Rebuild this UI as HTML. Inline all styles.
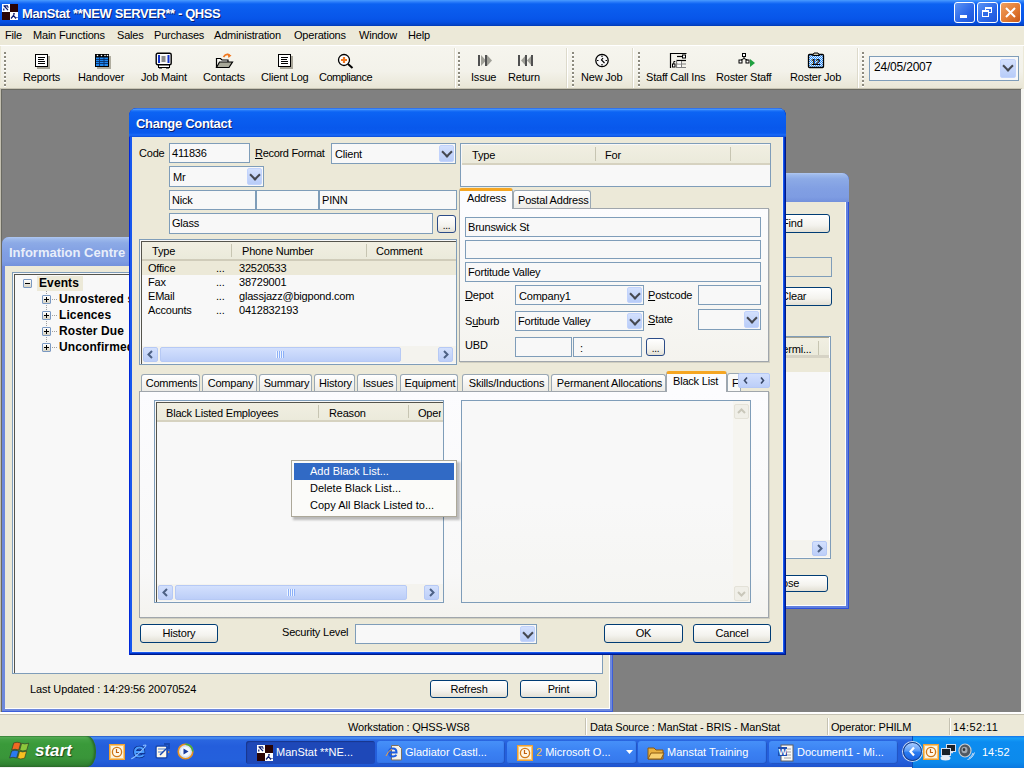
<!DOCTYPE html>
<html><head><meta charset="utf-8">
<style>
*{box-sizing:border-box;margin:0;padding:0}
html,body{width:1024px;height:768px;overflow:hidden}
body{position:relative;background:#808080;font-family:"Liberation Sans",sans-serif;font-size:11px;color:#000;letter-spacing:-0.2px}
.a{position:absolute}
.t{position:absolute;white-space:nowrap;line-height:12px}
.inp{position:absolute;border:1px solid #7F9DB9;background:#F8F8F8}
.cb{position:absolute;border:1px solid #7F9DB9;background:#F8F8F8}
.dd{position:absolute;top:1px;right:1px;bottom:1px;width:15px;border-radius:2px;background:linear-gradient(#D3E0FD,#B8CCF8);border:1px solid #C2D3FC}
.dd:after{content:"";position:absolute;left:3px;top:2px;width:6px;height:6px;border-right:2px solid #454850;border-bottom:2px solid #454850;transform:rotate(45deg)}
.btn{position:absolute;border:1px solid #003C74;border-radius:3px;background:linear-gradient(#FFFFFF 0%,#F4F3EE 60%,#E3E0D5 100%);text-align:center;line-height:17px}
.beige{background:#ECE9D8}
.hdr{position:absolute;background:linear-gradient(#F1EFE2,#EBEADB);border-bottom:3px solid #D6D3C5}
.tab{position:absolute;height:18px;border:1px solid #9AA8B4;border-bottom:none;border-radius:3px 3px 0 0;background:linear-gradient(#FFFFFF,#ECEBE6);}
.tab .t{top:4px}
.sb{position:absolute;background:#F4F3EE}
.sbb{position:absolute;border-radius:2px;background:linear-gradient(#D3E0FD,#BCCEF8);border:1px solid #B6C9F5}
</style></head><body>

<!-- main window frame -->
<div class="a beige" style="left:0;top:26px;width:1024px;height:63px"></div>
<div class="a" style="left:0;top:89px;width:1px;height:624px;background:#C4C0B0"></div>
<div class="a" style="left:1021px;top:89px;width:3px;height:624px;background:#F6F6F2"></div>

<!-- title bar -->
<div class="a" style="left:0;top:0;width:1024px;height:26px;background:linear-gradient(#4A9CFF 0px,#2A7CFA 2px,#0C62F2 4px,#0A5CEE 10px,#0856EA 18px,#0650E2 22px,#0444C8 25px,#0038B0 26px)"></div>
<svg class="a" style="left:2px;top:4px" width="16" height="16"><rect width="16" height="16" fill="#fff"/><rect x="8" y="0" width="8" height="8" fill="#2A0404"/><rect x="0" y="8" width="8" height="8" fill="#2A0404"/><path d="M1.5 1.8h4.5M2.2 2L6 6.2M1.8 4.5v2M6 2.5v1.2" stroke="#0A1A70" stroke-width="1.2" fill="none"/><path d="M11 9.8h2M9 14.5l2.5-3 2.5 3M14.5 13.5h1" stroke="#0A1A70" stroke-width="1.2" fill="none"/></svg>
<div class="t" style="left:22px;top:6px;font-size:13px;font-weight:bold;color:#fff;line-height:15px;letter-spacing:-0.4px;text-shadow:1px 1px 0 #0A1E6E">ManStat **NEW SERVER** - QHSS</div>
<!-- caption buttons -->
<div class="a" style="left:954px;top:2px;width:21px;height:21px;border:1px solid #fff;border-radius:3px;background:linear-gradient(135deg,#5C94F4,#2A66E8 60%,#1D55D8)"></div>
<div class="a" style="left:960px;top:15px;width:7px;height:3px;background:#fff"></div>
<div class="a" style="left:977px;top:2px;width:21px;height:21px;border:1px solid #fff;border-radius:3px;background:linear-gradient(135deg,#5C94F4,#2A66E8 60%,#1D55D8)"></div>
<div class="a" style="left:985px;top:7px;width:7px;height:6px;border:1px solid #fff;border-top-width:2px"></div>
<div class="a" style="left:982px;top:10px;width:7px;height:7px;border:1px solid #fff;border-top-width:2px;background:#2F6BE8"></div>
<div class="a" style="left:1000px;top:2px;width:21px;height:21px;border:1px solid #fff;border-radius:3px;background:linear-gradient(135deg,#F0A060,#E07830 60%,#C85818)"></div>
<svg class="a" style="left:1004px;top:6px" width="13" height="13"><path d="M2 2L11 11M11 2L2 11" stroke="#fff" stroke-width="2"/></svg>

<!-- menu bar -->
<div class="a" style="left:0;top:45px;width:1024px;height:1px;background:#fff"></div>
<div class="t" style="left:5px;top:29px">File</div>
<div class="t" style="left:33px;top:29px">Main Functions</div>
<div class="t" style="left:117px;top:29px">Sales</div>
<div class="t" style="left:154px;top:29px">Purchases</div>
<div class="t" style="left:214px;top:29px">Administration</div>
<div class="t" style="left:294px;top:29px">Operations</div>
<div class="t" style="left:359px;top:29px">Window</div>
<div class="t" style="left:408px;top:29px">Help</div>

<!-- toolbar -->
<div class="a" style="left:1px;top:46px;width:1022px;height:42px;background:linear-gradient(#F6F5EE,#F3F2EA 60%,#E9E6D6)"></div>
<div class="a" style="left:0;top:88px;width:1022px;height:1px;background:#C8C4B4"></div>

<!-- toolbar grips & separators -->
<div class="a" style="left:4px;top:52px;width:2px;height:36px;background:repeating-linear-gradient(#8C8A7E 0 2px,#fff 2px 3px,transparent 3px 4px)"></div>
<div class="a" style="left:455px;top:48px;width:1px;height:40px;background:#fff"></div>
<div class="a" style="left:454px;top:48px;width:1px;height:40px;background:#DDDACB"></div>
<div class="a" style="left:458px;top:52px;width:2px;height:36px;background:repeating-linear-gradient(#8C8A7E 0 2px,#fff 2px 3px,transparent 3px 4px)"></div>
<div class="a" style="left:567px;top:48px;width:1px;height:40px;background:#fff"></div>
<div class="a" style="left:566px;top:48px;width:1px;height:40px;background:#DDDACB"></div>
<div class="a" style="left:572px;top:52px;width:2px;height:36px;background:repeating-linear-gradient(#8C8A7E 0 2px,#fff 2px 3px,transparent 3px 4px)"></div>
<div class="a" style="left:633px;top:48px;width:1px;height:40px;background:#fff"></div>
<div class="a" style="left:632px;top:48px;width:1px;height:40px;background:#DDDACB"></div>
<div class="a" style="left:638px;top:52px;width:2px;height:36px;background:repeating-linear-gradient(#8C8A7E 0 2px,#fff 2px 3px,transparent 3px 4px)"></div>
<div class="a" style="left:858px;top:48px;width:1px;height:40px;background:#fff"></div>
<div class="a" style="left:857px;top:48px;width:1px;height:40px;background:#DDDACB"></div>
<div class="a" style="left:862px;top:52px;width:2px;height:36px;background:repeating-linear-gradient(#8C8A7E 0 2px,#fff 2px 3px,transparent 3px 4px)"></div>

<!-- toolbar icons -->
<svg class="a" style="left:34px;top:53px" width="17" height="16"><rect x="3" y="3" width="13" height="13" fill="#A8A598"/><rect x="1.5" y="1.5" width="12" height="12" fill="#fff" stroke="#000"/><path d="M4 4.5h7M4 6.5h6M4 8.5h7M4 10.5h7" stroke="#000"/></svg>
<svg class="a" style="left:94px;top:53px" width="18" height="17"><rect x="3" y="3" width="14" height="13" fill="#B0AD9F"/><rect x="1" y="1" width="14" height="13" fill="#000"/><circle cx="3.5" cy="2.5" r="0.8" fill="#fff"/><circle cx="7.5" cy="2.5" r="0.8" fill="#fff"/><circle cx="11" cy="2.5" r="0.8" fill="#fff"/><circle cx="13.5" cy="2.5" r="0.8" fill="#fff"/><rect x="2" y="4.5" width="12" height="8.5" fill="#1E88F0"/><path d="M2 6.5h12M2 8.5h12M2 10.5h12M5.5 4v9M10 4v9" stroke="#08306A" stroke-width="0.9"/></svg>
<svg class="a" style="left:155px;top:52px" width="18" height="17"><rect x="1.2" y="1.2" width="15" height="11.5" rx="1.5" fill="#fff" stroke="#000" stroke-width="1.4"/><rect x="3" y="3" width="11.5" height="8" fill="#1434C8"/><rect x="5" y="3" width="7.5" height="8" fill="#F8F8F8"/><path d="M6.5 5h4M6.5 7h4M6.5 9h4" stroke="#202020"/><rect x="3.5" y="13" width="11" height="2.5" fill="#fff" stroke="#000"/><path d="M4 16h3M11 16h3" stroke="#000"/></svg>
<svg class="a" style="left:215px;top:52px" width="19" height="17"><path d="M8.5 5Q11 1 14.5 3" stroke="#F07820" stroke-width="1.6" fill="none"/><path d="M12.5 1.5L16.5 3.5 13.5 6z" fill="#F07820"/><path d="M1.5 15.5V6.5h4l1.5 1.5h6v2" fill="#FAFAF4" stroke="#000" stroke-width="1.2"/><path d="M1.5 15.5l3-5.5h13l-3.5 5.5z" fill="#A8A898" stroke="#000" stroke-width="1.2"/></svg>
<svg class="a" style="left:277px;top:53px" width="17" height="16"><rect x="3" y="3" width="13" height="13" fill="#A8A598"/><rect x="1.5" y="1.5" width="12" height="12" fill="#fff" stroke="#000"/><path d="M4 4.5h7M4 6.5h6M4 8.5h7M4 10.5h7" stroke="#000"/></svg>
<svg class="a" style="left:337px;top:53px" width="18" height="16"><circle cx="7" cy="7" r="5.5" fill="#fff" stroke="#000" stroke-width="1.3"/><path d="M4 7h6M7 4v6" stroke="#F07820" stroke-width="2.2"/><path d="M11 11l4.5 4" stroke="#000" stroke-width="2"/></svg>
<svg class="a" style="left:477px;top:54px" width="17" height="13"><rect x="1" y="1" width="2" height="11" fill="#505050"/><path d="M4 1l5 5.5-5 5.5z" fill="#A0A098"/><rect x="8" y="1" width="2" height="11" fill="#505050"/><path d="M10 1l5 5.5-5 5.5z" fill="#A0A098"/></svg>
<svg class="a" style="left:517px;top:54px" width="18" height="13"><rect x="1" y="1" width="2" height="11" fill="#505050"/><path d="M9 1l-5 5.5 5 5.5z" fill="#A0A098"/><rect x="8" y="1" width="2" height="11" fill="#505050"/><path d="M15 1l-5 5.5 5 5.5z" fill="#A0A098"/><rect x="14" y="1" width="2" height="11" fill="#505050"/></svg>
<svg class="a" style="left:594px;top:53px" width="16" height="15"><circle cx="8" cy="7.5" r="6.2" fill="#F8F8F8" stroke="#000" stroke-width="1.3"/><path d="M8 2.5v1.5M8 11v1.5M3 7.5h1.5M11.5 7.5H13" stroke="#000" stroke-width="1.2"/><path d="M9 5L7.5 7l3 3" stroke="#000" stroke-width="1.2" fill="none"/></svg>
<svg class="a" style="left:669px;top:52px" width="19" height="17"><path d="M1.5 16V1.5h16" stroke="#000" stroke-width="1.2" fill="none"/><path d="M8 4.5h5" stroke="#000" stroke-width="1.2"/><rect x="13.5" y="3" width="3" height="3" fill="#fff" stroke="#000"/><path d="M7 8.5h10" stroke="#000" stroke-width="1.2"/><path d="M7.5 8v8M8 12h9M8 15.5h9M12.5 9v7" stroke="#808080"/><rect x="9" y="9.5" width="3" height="2" fill="#fff"/><rect x="9" y="13" width="3" height="2" fill="#fff"/><rect x="3.5" y="12" width="2.5" height="3" fill="#fff" stroke="#000"/><path d="M4.8 12V9.5h1.5" stroke="#000" fill="none"/></svg>
<svg class="a" style="left:738px;top:52px" width="19" height="17"><rect x="4.5" y="1.5" width="3" height="3" fill="#fff" stroke="#000"/><rect x="1" y="8" width="3" height="3" fill="#fff" stroke="#000"/><rect x="8" y="8" width="3" height="3" fill="#fff" stroke="#000"/><path d="M6 4.5v2M6 6.5L3 8M6 6.5L9.5 8" stroke="#000"/><path d="M12 7l5 4-5 4z" fill="#20A040"/></svg>
<svg class="a" style="left:807px;top:52px" width="18" height="17"><defs><pattern id="chk" width="2" height="2" patternUnits="userSpaceOnUse"><rect width="2" height="2" fill="#2A8CF8"/><rect width="1" height="1" fill="#E8F4FF"/><rect x="1" y="1" width="1" height="1" fill="#E8F4FF"/></pattern></defs><rect x="1.5" y="2.5" width="15" height="13" rx="1" fill="url(#chk)" stroke="#000" stroke-width="1.3"/><path d="M5.5 3.5l1.5-2.5h4l1.5 2.5z" fill="#C8C4B0" stroke="#000" stroke-width="1"/><text x="4.2" y="13.3" font-size="9" font-family="Liberation Sans" font-weight="bold" fill="#000" letter-spacing="-0.8">12</text></svg>

<!-- toolbar labels -->
<div class="t" style="left:23px;top:71px">Reports</div>
<div class="t" style="left:78px;top:71px">Handover</div>
<div class="t" style="left:141px;top:71px">Job Maint</div>
<div class="t" style="left:203px;top:71px">Contacts</div>
<div class="t" style="left:261px;top:71px">Client Log</div>
<div class="t" style="left:319px;top:71px;letter-spacing:-0.5px">Compliance</div>
<div class="t" style="left:471px;top:71px">Issue</div>
<div class="t" style="left:508px;top:71px">Return</div>
<div class="t" style="left:581px;top:71px">New Job</div>
<div class="t" style="left:646px;top:71px">Staff Call Ins</div>
<div class="t" style="left:716px;top:71px">Roster Staff</div>
<div class="t" style="left:790px;top:71px">Roster Job</div>

<!-- date combo -->
<div class="cb" style="left:869px;top:56px;width:150px;height:25px;background:#F8F8F8"><div class="dd" style="top:2px;right:2px;bottom:2px;width:16px"><div></div></div></div>
<div class="t" style="left:874px;top:61px;font-size:12px">24/05/2007</div>


<!-- MDI grey -->
<div class="a" style="left:1px;top:89px;width:1020px;height:624px;background:#808080;border-left:1px solid #6A6A62;border-top:1px solid #6A6A62"></div>

<!-- ===== Information Centre (inactive) ===== -->
<div class="a" style="left:2px;top:237px;width:611px;height:475px;background:#6F89DC;border-radius:7px 7px 0 0;box-shadow:inset -1px -1px 0 #3C5ED8"></div>
<div class="a" style="left:2px;top:237px;width:611px;height:29px;border-radius:7px 7px 0 0;background:linear-gradient(#B0C8F2 0px,#9DB9EB 2px,#8CAAE6 6px,#819FE3 16px,#7E9CE2 24px,#7391DC 29px)"></div>
<div class="a" style="left:5px;top:266px;width:605px;height:443px;background:#ECE9D8;border-right:1px solid #fff;border-bottom:1px solid #fff"></div>
<div class="t" style="left:9px;top:245px;font-size:13px;font-weight:bold;color:#E8EEFA;letter-spacing:0;line-height:15px">Information Centre</div>
<!-- tree -->
<div class="a" style="left:12px;top:272px;width:591px;height:402px;border:1px solid #7F9DB9;background:#F8F8F8"></div>
<div class="a" style="left:14px;top:274px;width:588px;height:399px;border-left:1px solid #55544C;border-top:1px solid #55544C"></div>
<div class="a" style="left:23px;top:279px;width:9px;height:9px;border:1px solid #7A99C2;border-radius:1px;background:linear-gradient(#fff,#D8D4C4)"></div>
<div class="a" style="left:25px;top:283px;width:5px;height:1px;background:#000"></div>
<div class="a" style="left:37px;top:276px;width:46px;height:15px;background:#ECE9D8"></div>
<div class="a" style="left:46px;top:291px;width:1px;height:57px;background:repeating-linear-gradient(#A0A0A0 0 1px,transparent 1px 2px)"></div>
<div class="t" style="left:39px;top:276px;font-size:12px;font-weight:bold;line-height:14px;letter-spacing:0.1px">Events</div>
<div class="a" style="left:42px;top:295px;width:9px;height:9px;border:1px solid #7A99C2;border-radius:1px;background:linear-gradient(#fff,#D8D4C4)"></div><div class="a" style="left:44px;top:299px;width:5px;height:1px;background:#000"></div><div class="a" style="left:46px;top:297px;width:1px;height:5px;background:#000"></div><div class="a" style="left:52px;top:299px;width:5px;height:1px;background:repeating-linear-gradient(90deg,#A0A0A0 0 1px,transparent 1px 2px)"></div><div class="t" style="left:59px;top:292px;font-size:12px;font-weight:bold;line-height:14px;letter-spacing:0.1px">Unrostered shifts</div>
<div class="a" style="left:42px;top:311px;width:9px;height:9px;border:1px solid #7A99C2;border-radius:1px;background:linear-gradient(#fff,#D8D4C4)"></div><div class="a" style="left:44px;top:315px;width:5px;height:1px;background:#000"></div><div class="a" style="left:46px;top:313px;width:1px;height:5px;background:#000"></div><div class="a" style="left:52px;top:315px;width:5px;height:1px;background:repeating-linear-gradient(90deg,#A0A0A0 0 1px,transparent 1px 2px)"></div><div class="t" style="left:59px;top:308px;font-size:12px;font-weight:bold;line-height:14px;letter-spacing:0.1px">Licences</div>
<div class="a" style="left:42px;top:327px;width:9px;height:9px;border:1px solid #7A99C2;border-radius:1px;background:linear-gradient(#fff,#D8D4C4)"></div><div class="a" style="left:44px;top:331px;width:5px;height:1px;background:#000"></div><div class="a" style="left:46px;top:329px;width:1px;height:5px;background:#000"></div><div class="a" style="left:52px;top:331px;width:5px;height:1px;background:repeating-linear-gradient(90deg,#A0A0A0 0 1px,transparent 1px 2px)"></div><div class="t" style="left:59px;top:324px;font-size:12px;font-weight:bold;line-height:14px;letter-spacing:0.1px">Roster Due</div>
<div class="a" style="left:42px;top:343px;width:9px;height:9px;border:1px solid #7A99C2;border-radius:1px;background:linear-gradient(#fff,#D8D4C4)"></div><div class="a" style="left:44px;top:347px;width:5px;height:1px;background:#000"></div><div class="a" style="left:46px;top:345px;width:1px;height:5px;background:#000"></div><div class="a" style="left:52px;top:347px;width:5px;height:1px;background:repeating-linear-gradient(90deg,#A0A0A0 0 1px,transparent 1px 2px)"></div><div class="t" style="left:59px;top:340px;font-size:12px;font-weight:bold;line-height:14px;letter-spacing:0.1px">Unconfirmed</div>

<div class="t" style="left:30px;top:683px;letter-spacing:-0.1px">Last Updated : 14:29:56 20070524</div>
<div class="btn" style="left:430px;top:680px;width:78px;height:18px">Refresh</div>
<div class="btn" style="left:520px;top:680px;width:77px;height:18px">Print</div>

<!-- ===== right background window (inactive) ===== -->
<div class="a" style="left:700px;top:173px;width:149px;height:436px;background:#6080DE;border-radius:0 7px 0 0;box-shadow:inset -1px -1px 0 #2E52DA"></div>
<div class="a" style="left:700px;top:173px;width:149px;height:29px;border-radius:0 7px 0 0;background:linear-gradient(#B0C8F2 0px,#9DB9EB 2px,#8CAAE6 6px,#819FE3 16px,#7E9CE2 24px,#7391DC 29px)"></div>
<div class="a" style="left:700px;top:202px;width:146px;height:404px;background:#ECE9D8;border-right:1px solid #fff;border-bottom:1px solid #fff"></div>
<div class="btn" style="left:700px;top:214px;width:130px;height:19px;text-align:left;padding-left:81px">Find</div>
<div class="a" style="left:700px;top:257px;width:132px;height:20px;border:1px solid #7F9DB9;background:#ECE9D8"></div>
<div class="btn" style="left:700px;top:287px;width:132px;height:19px;text-align:left;padding-left:80px">Clear</div>
<div class="a" style="left:700px;top:336px;width:131px;height:223px;border:1px solid #7F9DB9;background:#F8F8F8"></div>
<div class="hdr" style="left:701px;top:337px;width:128px;height:21px;border-top:1px solid #A8A490"></div><div class="a" style="left:829px;top:337px;width:1px;height:221px;background:#fff"></div>
<div class="a" style="left:818px;top:341px;width:1px;height:14px;background:#C7C5B2"></div>
<div class="t" style="left:777px;top:343px">Termi...</div>
<div class="a" style="left:701px;top:358px;width:129px;height:14px;background:#ECE9D8"></div>
<div class="sb" style="left:701px;top:540px;width:129px;height:17px"></div>
<div class="sbb" style="left:812px;top:541px;width:15px;height:15px"></div>
<svg class="a" style="left:815px;top:544px" width="9" height="9"><path d="M3 1l3.5 3.5L3 8" stroke="#4D6185" stroke-width="2" fill="none"/></svg>
<div class="btn" style="left:700px;top:575px;width:128px;height:17px;text-align:left;padding-left:71px;line-height:15px">Close</div>

<!-- ===== Change Contact dialog ===== -->
<div class="a" style="left:129px;top:108px;width:657px;height:547px;background:#1858EE;border-radius:8px 8px 0 0;box-shadow:inset 1px 0 0 #0028D8,inset -1px -1px 0 #001A88,inset -2px -2px 0 #0032C4"></div>
<div class="a" style="left:129px;top:108px;width:657px;height:29px;border-radius:8px 8px 0 0;background:linear-gradient(#0A3ED8 0px,#5AA8FF 1px,#2C80FA 2px,#0C64F4 4px,#0A5EF0 10px,#0858EC 20px,#0A5AEE 25px,#1A6AF8 27px,#0A4CD8 29px)"></div>
<div class="a" style="left:132px;top:137px;width:651px;height:515px;background:#ECE9D8"></div>
<div class="a" style="left:782px;top:137px;width:1px;height:515px;background:#F4F2EA"></div>
<div class="a" style="left:132px;top:651px;width:651px;height:1px;background:#F4F2EA"></div>
<div class="t" style="left:136px;top:116px;font-size:13px;font-weight:bold;color:#fff;line-height:15px;letter-spacing:-0.3px;text-shadow:1px 1px 0 #0A1E6E">Change Contact</div>

<!-- top-left fields -->
<div class="t" style="left:139px;top:147px">Code</div>
<div class="inp" style="left:169px;top:143px;width:81px;height:20px"></div>
<div class="t" style="left:172px;top:147px">411836</div>
<div class="t" style="left:255px;top:147px;letter-spacing:-0.3px"><u>R</u>ecord Format</div>
<div class="cb" style="left:331px;top:143px;width:125px;height:21px"><div class="dd"></div></div>
<div class="t" style="left:335px;top:148px">Client</div>
<div class="cb" style="left:169px;top:166px;width:95px;height:21px"><div class="dd"></div></div>
<div class="t" style="left:173px;top:171px">Mr</div>
<div class="inp" style="left:169px;top:190px;width:87px;height:20px"></div>
<div class="t" style="left:172px;top:194px">Nick</div>
<div class="inp" style="left:256px;top:190px;width:63px;height:20px"></div>
<div class="inp" style="left:319px;top:190px;width:138px;height:20px"></div>
<div class="t" style="left:322px;top:194px">PINN</div>
<div class="inp" style="left:169px;top:213px;width:264px;height:21px"></div>
<div class="t" style="left:172px;top:217px">Glass</div>
<div class="btn" style="left:437px;top:215px;width:19px;height:18px;line-height:20px;font-size:10px;border-color:#2C4C88">...</div>

<!-- phone list -->
<div class="a" style="left:139px;top:239px;width:318px;height:126px;border:1px solid #7F9DB9;background:#F8F8F8"></div>
<div class="a" style="left:141px;top:241px;width:315px;height:123px;border-left:1px solid #55544C;border-top:1px solid #55544C"></div>
<div class="hdr" style="left:142px;top:242px;width:314px;height:19px;border-bottom-width:2px;border-bottom-color:#D0CCBA"></div>
<div class="a" style="left:231px;top:244px;width:1px;height:13px;background:#C7C5B2"></div>
<div class="a" style="left:366px;top:244px;width:1px;height:13px;background:#C7C5B2"></div>
<div class="t" style="left:152px;top:245px">Type</div>
<div class="t" style="left:242px;top:245px">Phone Number</div>
<div class="t" style="left:376px;top:245px">Comment</div>
<div class="a" style="left:142px;top:261px;width:314px;height:14px;background:#ECE9D8"></div>
<div class="t" style="left:148px;top:262px">Office</div><div class="t" style="left:216px;top:262px">...</div><div class="t" style="left:239px;top:262px">32520533</div>
<div class="t" style="left:148px;top:276px">Fax</div><div class="t" style="left:216px;top:276px">...</div><div class="t" style="left:239px;top:276px">38729001</div>
<div class="t" style="left:148px;top:290px">EMail</div><div class="t" style="left:216px;top:290px">...</div><div class="t" style="left:239px;top:290px">glassjazz@bigpond.com</div>
<div class="t" style="left:148px;top:304px">Accounts</div><div class="t" style="left:216px;top:304px">...</div><div class="t" style="left:239px;top:304px">0412832193</div>
<div class="sb" style="left:142px;top:346px;width:314px;height:17px"></div>
<div class="sbb" style="left:143px;top:347px;width:15px;height:15px"></div>
<svg class="a" style="left:146px;top:350px" width="9" height="9"><path d="M6 1L2.5 4.5 6 8" stroke="#4D6185" stroke-width="2" fill="none"/></svg>
<div class="sbb" style="left:160px;top:347px;width:241px;height:15px"></div>
<div class="a" style="left:276px;top:351px;width:8px;height:7px;background:repeating-linear-gradient(90deg,#EEF4FE 0 1px,#8CB0F8 1px 2px)"></div>
<div class="sbb" style="left:438px;top:347px;width:15px;height:15px"></div>
<svg class="a" style="left:441px;top:350px" width="9" height="9"><path d="M3 1l3.5 3.5L3 8" stroke="#4D6185" stroke-width="2" fill="none"/></svg>

<!-- Type/For list -->
<div class="a" style="left:460px;top:143px;width:311px;height:44px;border:1px solid #7F9DB9;background:#F8F8F8"></div>
<div class="hdr" style="left:462px;top:145px;width:308px;height:20px;border-bottom-width:2px;border-bottom-color:#D6D2C0"></div>
<div class="a" style="left:595px;top:147px;width:1px;height:14px;background:#C7C5B2"></div>
<div class="a" style="left:730px;top:147px;width:1px;height:14px;background:#C7C5B2"></div>
<div class="t" style="left:472px;top:149px">Type</div>
<div class="t" style="left:605px;top:149px">For</div>

<!-- address tabs -->
<div class="a" style="left:459px;top:208px;width:310px;height:154px;border:1px solid #A0A6AC;background:linear-gradient(#FCFCFE,#F4F3EE);box-shadow:1px 1px 0 #D0CEC0"></div>
<div class="tab" style="left:513px;top:190px;width:78px;height:18px"><div class="t" style="left:4px;top:3px">Postal Address</div></div>
<div class="a" style="left:459px;top:188px;width:54px;height:21px;border:1px solid #A0A6AC;border-bottom:none;border-radius:3px 3px 0 0;background:#FCFCFE;border-top:3px solid #F5A623"></div>
<div class="t" style="left:467px;top:192px">Address</div>
<div class="inp" style="left:465px;top:217px;width:296px;height:20px"></div>
<div class="t" style="left:468px;top:221px">Brunswick St</div>
<div class="inp" style="left:465px;top:240px;width:296px;height:19px"></div>
<div class="inp" style="left:465px;top:262px;width:296px;height:20px"></div>
<div class="t" style="left:468px;top:266px">Fortitude Valley</div>
<div class="t" style="left:465px;top:289px"><u>D</u>epot</div>
<div class="cb" style="left:515px;top:285px;width:129px;height:20px"><div class="dd"></div></div>
<div class="t" style="left:519px;top:290px">Company1</div>
<div class="t" style="left:648px;top:289px"><u>P</u>ostcode</div>
<div class="inp" style="left:698px;top:285px;width:63px;height:20px"></div>
<div class="t" style="left:465px;top:315px">S<u>u</u>burb</div>
<div class="cb" style="left:515px;top:311px;width:129px;height:20px"><div class="dd"></div></div>
<div class="t" style="left:518px;top:315px">Fortitude Valley</div>
<div class="t" style="left:648px;top:313px"><u>S</u>tate</div>
<div class="cb" style="left:698px;top:309px;width:63px;height:21px"><div class="dd"></div></div>
<div class="t" style="left:465px;top:339px">UBD</div>
<div class="inp" style="left:515px;top:337px;width:57px;height:20px"></div>
<div class="inp" style="left:573px;top:337px;width:69px;height:20px"></div>
<div class="t" style="left:580px;top:342px">:</div>
<div class="btn" style="left:646px;top:338px;width:19px;height:18px;line-height:20px;font-size:10px;border-color:#2C4C88">...</div>

<!-- bottom tabs -->
<div class="a" style="left:139px;top:391px;width:630px;height:227px;border:1px solid #A0A6AC;background:linear-gradient(#FCFCFE 0%,#F8F8F8 80%,#F4F3EF 100%);box-shadow:1px 1px 0 #D0CEC0"></div>
<div class="tab" style="left:141px;top:374px;width:59px;height:17px"><div class="t" style="left:1px;width:57px;text-align:center;top:2px">Comments</div></div>
<div class="tab" style="left:202px;top:374px;width:55px;height:17px"><div class="t" style="left:1px;width:53px;text-align:center;top:2px">Company</div></div>
<div class="tab" style="left:259px;top:374px;width:53px;height:17px"><div class="t" style="left:1px;width:51px;text-align:center;top:2px">Summary</div></div>
<div class="tab" style="left:314px;top:374px;width:41px;height:17px"><div class="t" style="left:1px;width:39px;text-align:center;top:2px">History</div></div>
<div class="tab" style="left:357px;top:374px;width:40px;height:17px"><div class="t" style="left:1px;width:38px;text-align:center;top:2px">Issues</div></div>
<div class="tab" style="left:400px;top:374px;width:58px;height:17px"><div class="t" style="left:1px;width:56px;text-align:center;top:2px">Equipment</div></div>
<div class="tab" style="left:462px;top:374px;width:87px;height:17px"><div class="t" style="left:1px;width:85px;text-align:center;top:2px">Skills/Inductions</div></div>
<div class="tab" style="left:551px;top:374px;width:115px;height:17px"><div class="t" style="left:1px;width:113px;text-align:center;top:2px">Permanent Allocations</div></div>
<div class="tab" style="left:727px;top:373px;width:14px;height:18px;overflow:hidden;background:#FAFAF8"><div class="t" style="left:4px;top:3px">F</div></div>
<div class="a" style="left:666px;top:371px;width:61px;height:21px;border:1px solid #A0A6AC;border-bottom:none;border-radius:3px 3px 0 0;background:#FCFCFE;border-top:3px solid #F5A623"></div><div class="t" style="left:673px;top:375px">Black List</div>
<div class="sbb" style="left:738px;top:373px;width:32px;height:15px;border-radius:2px"></div><svg class="a" style="left:742px;top:376px" width="24" height="9"><path d="M5 1.5L2.5 4.5 5 7.5M19 1.5l2.5 3-2.5 3" stroke="#3A4A6A" stroke-width="1.6" fill="none"/></svg>


<!-- black list listview -->
<div class="a" style="left:154px;top:400px;width:290px;height:203px;border:1px solid #7F9DB9;background:#F8F8F8"></div>
<div class="a" style="left:156px;top:402px;width:287px;height:200px;border-left:1px solid #55544C;border-top:1px solid #55544C"></div>
<div class="hdr" style="left:157px;top:403px;width:286px;height:19px;border-bottom-width:2px;border-bottom-color:#D6D2C0"></div>
<div class="a" style="left:318px;top:405px;width:1px;height:13px;background:#C7C5B2"></div>
<div class="a" style="left:408px;top:405px;width:1px;height:13px;background:#C7C5B2"></div>
<div class="t" style="left:166px;top:407px">Black Listed Employees</div>
<div class="t" style="left:329px;top:407px">Reason</div>
<div class="t" style="left:418px;top:407px;width:23px;overflow:hidden">Operator</div>
<div class="sb" style="left:157px;top:584px;width:286px;height:17px"></div>
<div class="sbb" style="left:158px;top:585px;width:15px;height:15px"></div>
<svg class="a" style="left:161px;top:588px" width="9" height="9"><path d="M6 1L2.5 4.5 6 8" stroke="#4D6185" stroke-width="2" fill="none"/></svg>
<div class="sbb" style="left:175px;top:585px;width:232px;height:15px"></div>
<div class="a" style="left:287px;top:589px;width:8px;height:7px;background:repeating-linear-gradient(90deg,#EEF4FE 0 1px,#8CB0F8 1px 2px)"></div>
<div class="sbb" style="left:424px;top:585px;width:15px;height:15px"></div>
<svg class="a" style="left:427px;top:588px" width="9" height="9"><path d="M3 1l3.5 3.5L3 8" stroke="#4D6185" stroke-width="2" fill="none"/></svg>

<!-- memo -->
<div class="a" style="left:461px;top:400px;width:290px;height:203px;border:1px solid #7F9DB9;background:linear-gradient(#F8F8F8 50%,#F5F5F2 100%)"></div>
<div class="a" style="left:733px;top:401px;width:17px;height:201px;background:#F6F5F0"></div>
<div class="a" style="left:734px;top:404px;width:15px;height:15px;border:1px solid #E4E2D8;border-radius:2px;background:#F0EFE8"></div>
<svg class="a" style="left:737px;top:407px" width="9" height="9"><path d="M1 6l3.5-3.5L8 6" stroke="#C9C7BA" stroke-width="2" fill="none"/></svg>
<div class="a" style="left:734px;top:586px;width:15px;height:15px;border:1px solid #E4E2D8;border-radius:2px;background:#F0EFE8"></div>
<svg class="a" style="left:737px;top:589px" width="9" height="9"><path d="M1 3l3.5 3.5L8 3" stroke="#C9C7BA" stroke-width="2" fill="none"/></svg>

<!-- bottom row -->
<div class="btn" style="left:140px;top:624px;width:78px;height:19px">History</div>
<div class="t" style="left:282px;top:626px">Security Level</div>
<div class="cb" style="left:355px;top:624px;width:182px;height:20px"><div class="dd"></div></div>
<div class="btn" style="left:604px;top:624px;width:79px;height:19px">OK</div>
<div class="btn" style="left:693px;top:624px;width:78px;height:19px">Cancel</div>

<!-- context menu -->
<div class="a" style="left:293px;top:462px;width:167px;height:58px;background:rgba(0,0,0,0.25);filter:blur(1px)"></div>
<div class="a" style="left:291px;top:460px;width:166px;height:57px;border:1px solid #ACA899;background:#FBFBF9"></div>
<div class="a" style="left:294px;top:463px;width:160px;height:17px;background:#316AC5"></div>
<div class="t" style="left:310px;top:465px;color:#fff;letter-spacing:0">Add Black List...</div>
<div class="t" style="left:310px;top:482px;letter-spacing:0">Delete Black List...</div>
<div class="t" style="left:310px;top:499px;letter-spacing:0">Copy All Black Listed to...</div>

<!-- status bar -->
<div class="a" style="left:0;top:712px;width:1024px;height:24px;background:#ECE9D8"></div>
<div class="a" style="left:0;top:712px;width:1024px;height:2px;background:#FFFFFF"></div>
<div class="a" style="left:0;top:714px;width:1024px;height:1px;background:#C5C2B2"></div>
<div class="a" style="left:585px;top:718px;width:1px;height:17px;background:#C5C2B2"></div><div class="a" style="left:586px;top:718px;width:1px;height:17px;background:#fff"></div>
<div class="a" style="left:827px;top:718px;width:1px;height:17px;background:#C5C2B2"></div><div class="a" style="left:828px;top:718px;width:1px;height:17px;background:#fff"></div>
<div class="a" style="left:949px;top:718px;width:1px;height:17px;background:#C5C2B2"></div><div class="a" style="left:950px;top:718px;width:1px;height:17px;background:#fff"></div>
<div class="t" style="left:348px;top:721px">Workstation : QHSS-WS8</div>
<div class="t" style="left:590px;top:721px">Data Source : ManStat - BRIS - ManStat</div>
<div class="t" style="left:831px;top:721px">Operator: PHILM</div>
<div class="t" style="left:953px;top:721px;letter-spacing:0.4px">14:52:11</div>

<!-- taskbar -->
<div class="a" style="left:0;top:736px;width:1024px;height:32px;background:linear-gradient(#1F48B8 0px,#3D82EE 1px,#4A90F0 2px,#2A66E0 4px,#245EDC 10px,#2460DC 24px,#2058D4 29px,#1C4EC6 32px)"></div>
<div class="a" style="left:0;top:767px;width:1024px;height:1px;background:#F0F0F0"></div>
<!-- start -->
<div class="a" style="left:0;top:736px;width:96px;height:31px;border-radius:0 9px 9px 0 / 0 15px 15px 0;background:linear-gradient(#2F7A2F 0px,#5AB05A 1px,#44A244 3px,#3A9A3A 8px,#399539 22px,#2F8030 29px,#2A6A2A 31px);box-shadow:inset -2px 0 2px #2A6A2A"></div>
<svg class="a" style="left:9px;top:741px" width="23" height="21"><g transform="skewX(-8)"><path d="M5 2q3-1.5 7 0l-1 7q-4-1.5-7 0z" fill="#F06A22" stroke="#303020" stroke-width="0.6"/><path d="M13 2.2q3 1.5 7 0l-1 7q-4 1.5-7 0z" fill="#8CC83C" stroke="#303020" stroke-width="0.6"/><path d="M4 10q3-1.5 7 0l-1 7q-4-1.5-7 0z" fill="#2A7AF0" stroke="#303020" stroke-width="0.6"/><path d="M12 10.2q3 1.5 7 0l-1 7q-4 1.5-7 0z" fill="#F8C020" stroke="#303020" stroke-width="0.6"/></g></svg>
<div class="t" style="left:35px;top:742px;font-size:17px;font-weight:bold;font-style:italic;color:#fff;line-height:18px;letter-spacing:0;text-shadow:1px 1px 1px #1A4A1A">start</div>
<!-- quick launch -->
<svg class="a" style="left:109px;top:744px" width="16" height="16"><rect x="0.5" y="0.5" width="15" height="15" fill="#FBF3E0" stroke="#F0A030"/><rect x="1.5" y="1.5" width="13" height="13" fill="none" stroke="#F8C878"/><circle cx="8" cy="8" r="4.6" fill="#FFF8E8" stroke="#D07818" stroke-width="1.3"/><path d="M7.5 5v3.5h2.5" stroke="#C06010" stroke-width="1.2" fill="none"/></svg>
<svg class="a" style="left:131px;top:743px" width="17" height="17"><path d="M4 9h8.5Q12.5 4.5 8.5 4.5Q4 4.5 4 9Q4 13.5 8.5 13.5Q11 13.5 12.5 12" stroke="#0A2A80" stroke-width="3.4" fill="none"/><path d="M4 9h8.5Q12.5 4.5 8.5 4.5Q4 4.5 4 9Q4 13.5 8.5 13.5Q11 13.5 12.5 12" stroke="#4A9CFF" stroke-width="2" fill="none"/><path d="M1.5 15Q-1 17 4 13.5Q10 9 14 4Q16.5 1 12 2.5" stroke="#8CC0FF" stroke-width="1.1" fill="none"/></svg>
<svg class="a" style="left:155px;top:743px" width="16" height="17"><rect x="1" y="3" width="11" height="12" rx="1.5" fill="#FFF8E8" stroke="#1848B0" stroke-width="1.5"/><path d="M3 6h7M3 9h5" stroke="#5080D0"/><path d="M9 1h5v5" stroke="#1848B0" stroke-width="1.8" fill="none"/><path d="M5 12l8-8" stroke="#1848B0" stroke-width="1.5"/><path d="M13 8l2 1-2 1z" fill="#F8A020"/></svg>
<svg class="a" style="left:177px;top:743px" width="17" height="17"><circle cx="8.5" cy="8.5" r="7.3" fill="#D8E4F4" stroke="#E89020" stroke-width="1.6"/><path d="M8.5 1.2a7.3 7.3 0 0 1 7.3 7.3" stroke="#40B040" stroke-width="1.6" fill="none"/><circle cx="8.5" cy="8.5" r="4.8" fill="#F4F8FF"/><path d="M6.5 5.5l5 3-5 3z" fill="#1A3A9A"/></svg>
<!-- task buttons -->
<div class="a" style="left:246px;top:741px;width:129px;height:23px;border-radius:3px;background:#1E48B8;box-shadow:inset 1px 1px 1px #18368C"></div>
<svg class="a" style="left:257px;top:745px" width="16" height="16"><rect width="16" height="16" fill="#fff"/><rect x="8" y="0" width="8" height="8" fill="#2A0404"/><rect x="0" y="8" width="8" height="8" fill="#2A0404"/><path d="M1.5 1.8h4.5M2.2 2L6 6.2M1.8 4.5v2M6 2.5v1.2" stroke="#0A1A70" stroke-width="1.2" fill="none"/><path d="M11 9.8h2M9 14.5l2.5-3 2.5 3M14.5 13.5h1" stroke="#0A1A70" stroke-width="1.2" fill="none"/></svg>
<div class="t" style="left:276px;top:746px;color:#fff;letter-spacing:0">ManStat **NE...</div>
<div class="a" style="left:377px;top:741px;width:128px;height:23px;border-radius:3px;background:linear-gradient(#4690F8,#3A80F2 50%,#3577EC);box-shadow:inset -1px -1px 1px #2050C0"></div>
<svg class="a" style="left:385px;top:744px" width="18" height="17"><path d="M6.5 1.5h7l3 3v11.5h-10z" fill="#F4F2E8" stroke="#7A7060"/><path d="M4 8.5h7.5Q11.5 4.5 8 4.5Q4 4.5 4 8.5Q4 12.5 8 12.5Q10 12.5 11.5 11" stroke="#1A5CE0" stroke-width="2" fill="none"/><path d="M1 12Q3 7 7 5" stroke="#F0A040" stroke-width="1" fill="none"/></svg>
<div class="t" style="left:405px;top:746px;color:#fff;letter-spacing:0">Gladiator Castl...</div>
<div class="a" style="left:507px;top:741px;width:130px;height:23px;border-radius:3px;background:linear-gradient(#4690F8,#3A80F2 50%,#3577EC);box-shadow:inset -1px -1px 1px #2050C0"></div>
<svg class="a" style="left:517px;top:745px" width="16" height="16"><rect x="0.5" y="0.5" width="15" height="15" fill="#FBF3E0" stroke="#F0A030"/><rect x="1.5" y="1.5" width="13" height="13" fill="none" stroke="#F8C878"/><circle cx="8" cy="8" r="4.6" fill="#FFF8E8" stroke="#D07818" stroke-width="1.3"/><path d="M7.5 5v3.5h2.5" stroke="#C06010" stroke-width="1.2" fill="none"/></svg>
<div class="t" style="left:536px;top:746px;color:#fff;letter-spacing:0"><span style="color:#F8C040">2</span> Microsoft O...</div>
<svg class="a" style="left:626px;top:750px" width="7" height="4"><path d="M0 0h7L3.5 4z" fill="#fff"/></svg>
<div class="a" style="left:638px;top:741px;width:129px;height:23px;border-radius:3px;background:linear-gradient(#4690F8,#3A80F2 50%,#3577EC);box-shadow:inset -1px -1px 1px #2050C0"></div>
<svg class="a" style="left:647px;top:745px" width="18" height="16"><path d="M1 3h6l2 2h7v9H1z" fill="#E8B040" stroke="#8C5A10"/><path d="M1 14l3-6h13l-3 6z" fill="#F8D070" stroke="#8C5A10"/></svg>
<div class="t" style="left:667px;top:746px;color:#fff;letter-spacing:0">Manstat Training</div>
<div class="a" style="left:769px;top:741px;width:129px;height:23px;border-radius:3px;background:linear-gradient(#4690F8,#3A80F2 50%,#3577EC);box-shadow:inset -1px -1px 1px #2050C0"></div>
<svg class="a" style="left:778px;top:744px" width="16" height="18"><rect x="3" y="1" width="12" height="16" fill="#F8F8F8" stroke="#606060"/><path d="M6 5h7M6 8h7M6 11h7M6 14h7" stroke="#A0A0A0"/><rect x="0" y="3" width="9" height="9" fill="#2050B0"/><text x="0.5" y="11" font-size="9" font-family="Liberation Sans" font-weight="bold" fill="#fff">W</text></svg>
<div class="t" style="left:797px;top:746px;color:#fff;letter-spacing:0">Document1 - Mi...</div>
<!-- tray -->
<div class="a" style="left:912px;top:736px;width:112px;height:32px;background:linear-gradient(#1470E8 0px,#18A0F8 2px,#0C8CF0 6px,#0C8AEC 26px,#0A78E0 32px);border-left:1px solid #0A4CB8"></div>
<div class="a" style="left:903px;top:742px;width:19px;height:19px;border-radius:50%;background:linear-gradient(#A8CCFF 0%,#5A9CF8 45%,#2A7CF0 55%,#1A60E0 100%);border:1px solid #1A3A80;box-shadow:0 0 0 1px #C8D8F0"></div>
<svg class="a" style="left:908px;top:746px" width="10" height="11"><path d="M6 1.5L2.5 5.5 6 9.5" stroke="#fff" stroke-width="2.2" fill="none"/></svg>
<svg class="a" style="left:923px;top:744px" width="16" height="16"><rect x="0.5" y="0.5" width="15" height="15" fill="#FBF3E0" stroke="#F0A030"/><rect x="1.5" y="1.5" width="13" height="13" fill="none" stroke="#F8C878"/><circle cx="8" cy="8" r="4.6" fill="#FFF8E8" stroke="#D07818" stroke-width="1.3"/><path d="M7.5 5v3.5h2.5" stroke="#C06010" stroke-width="1.2" fill="none"/></svg>
<svg class="a" style="left:940px;top:743px" width="17" height="18"><rect x="6.5" y="1.5" width="9" height="7" fill="#1A2028" stroke="#D8E0F0"/><path d="M9 9.5h4" stroke="#D8E0F0" stroke-width="1.5"/><rect x="1.5" y="5.5" width="9" height="7" fill="#1A2028" stroke="#D8E0F0"/><ellipse cx="5.5" cy="15" rx="5" ry="2.5" fill="#E8ECF4"/></svg>
<svg class="a" style="left:958px;top:743px" width="18" height="18"><ellipse cx="7" cy="7.5" rx="6" ry="6.5" fill="#505860" stroke="#C8CCD0" stroke-width="1.2"/><ellipse cx="6.5" cy="7" rx="3" ry="3.3" fill="#A0A8B0"/><ellipse cx="6" cy="6.5" rx="1.3" ry="1.5" fill="#303438"/><path d="M11 15q3-1 4-5M9.5 16.5q5-1 7-7" stroke="#E0E8F8" stroke-width="0.9" fill="none"/></svg>
<div class="t" style="left:982px;top:746px;color:#fff;letter-spacing:0">14:52</div>

</body></html>
